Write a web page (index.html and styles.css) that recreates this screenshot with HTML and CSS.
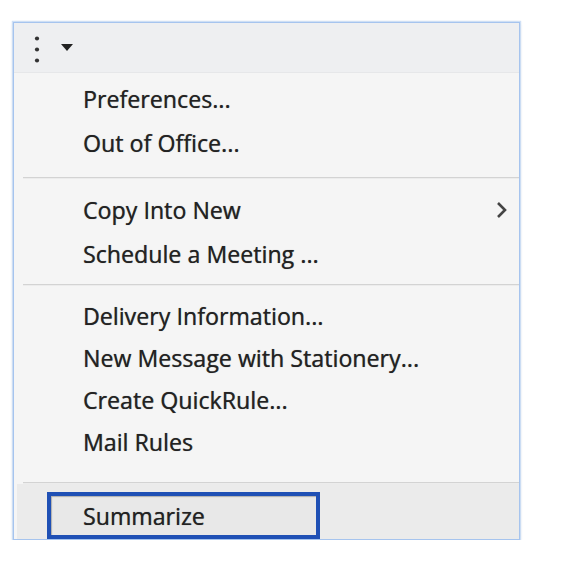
FILE: index.html
```html
<!DOCTYPE html>
<html>
<head>
<meta charset="utf-8">
<link rel="stylesheet" href="styles.css">
</head>
<body>
<div class="menu">
  <div class="menu-head">
    <svg class="head-icons" width="60" height="49" viewBox="0 0 60 49">
      <circle cx="23" cy="15.5" r="2.1" fill="#333"/>
      <circle cx="23" cy="26.5" r="2.1" fill="#333"/>
      <circle cx="23" cy="37.5" r="2.1" fill="#333"/>
      <polygon points="47,21 59,21 53,28" fill="#222"/>
    </svg>
  </div>
  <div class="group g1">
    <div class="item">Preferences...</div>
    <div class="item">Out of Office...</div>
  </div>
  <div class="sep"></div>
  <div class="group g2">
    <div class="item has-sub">Copy Into New
      <svg class="chev" width="12" height="18" viewBox="0 0 12 18"><polyline points="2,2 9,9 2,16" fill="none" stroke="#444" stroke-width="2.6"/></svg>
    </div>
    <div class="item">Schedule a Meeting ...</div>
  </div>
  <div class="sep"></div>
  <div class="group g3">
    <div class="item">Delivery Information...</div>
    <div class="item">New Message with Stationery...</div>
    <div class="item">Create QuickRule...</div>
    <div class="item">Mail Rules</div>
  </div>
  <div class="sep"></div>
  <div class="focus-row">
    <div class="focus-item">Summarize</div>
  </div>
</div>
</body>
</html>
```
FILE: styles.css
```css
html, body {
  margin: 0;
  padding: 0;
  background: #ffffff;
}
body {
  font-family: "Open Sans", "Noto Sans", sans-serif;
  color: #222222;
}
.menu {
  margin: 22px 0 0 13px;
  width: 505px;
  border: 1px solid #a6c4ee;
  box-shadow: 0 0 1px 1px rgba(170, 200, 240, 0.55), 0 1px 4px rgba(0, 0, 0, 0.08);
  background: #f5f5f5;
}
.menu-head {
  height: 49px;
  background: #eeeff1;
  border-bottom: 1px solid #e6e7e9;
  display: flex;
  align-items: center;
}
.head-icons {
  display: block;
}
.group {
  display: flex;
  flex-direction: column;
}
.g1 { padding: 4px 0 12px; }
.g2 { padding: 9px 0 8px; }
.g3 { padding: 9px 0 19px; }
.item,
.focus-item {
  font-size: 23px;
  letter-spacing: 0.1px;
  text-shadow: 0.4px 0 0 rgba(0, 0, 0, 0.45), 0 0 1px rgba(0, 0, 0, 0.35);
  white-space: nowrap;
  display: flex;
  align-items: center;
}
.item {
  padding-left: 69px;
}
.g1 .item, .g2 .item { height: 44px; }
.g3 .item { height: 42px; }
.has-sub {
  justify-content: space-between;
  padding-right: 11px;
}
.chev { display: block; }
.sep {
  height: 1px;
  background: #d3d3d3;
  border-bottom: 1px solid #ececec;
  margin-left: 9px;
}
.focus-row {
  margin-left: 3px;
  height: 55px;
  background: #ebebeb;
  display: flex;
  align-items: flex-end;
  padding-left: 30px;
}
.focus-item {
  box-sizing: border-box;
  width: 273px;
  height: 47px;
  border: 4px solid #1f50b5;
  box-shadow: inset 1px 1px 1px rgba(0, 0, 0, 0.25);
  background: #e8e8e8;
  padding-left: 32px;
}
```
